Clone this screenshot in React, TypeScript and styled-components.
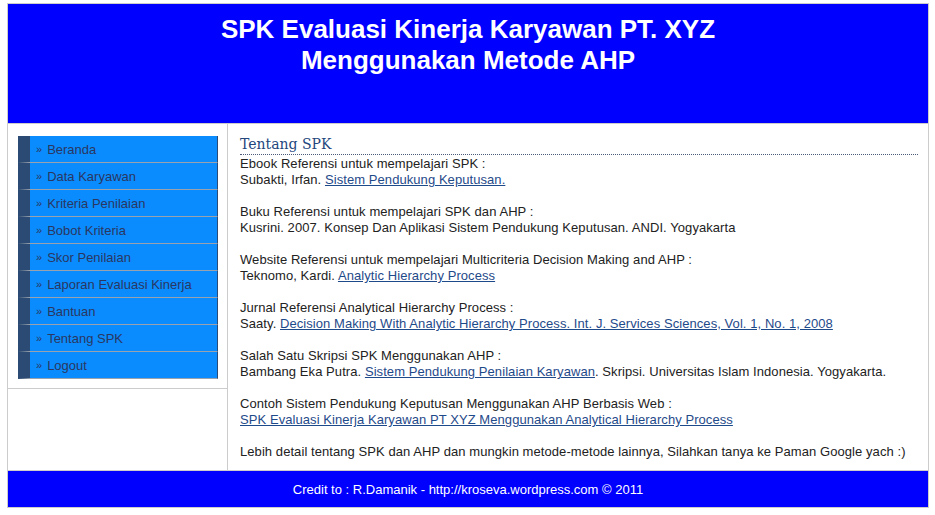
import React from 'react';
import styled, { createGlobalStyle } from 'styled-components';

const GlobalStyle = createGlobalStyle`
  html, body {
    margin: 0;
    padding: 0;
    background: #ffffff;
  }
  body {
    font-family: "Liberation Sans", Arial, sans-serif;
  }
`;

const Page = styled.div`
  margin: 3px 0 0 7px;
  width: 920px;
  border: 1px solid #cccccc;
  background: #ffffff;
`;

const Header = styled.header`
  background: #0000ff;
  height: 119px;
  padding-top: 10px;
  box-sizing: border-box;
  text-align: center;
`;

const HeaderTitle = styled.h1`
  margin: 0;
  color: #ffffff;
  font-family: "Liberation Sans", Arial, sans-serif;
  font-weight: bold;
  font-size: 26px;
  line-height: 31px;
`;

const Body = styled.div`
  display: flex;
  align-items: stretch;
  border-top: 1px solid #cccccc;
`;

const Sidebar = styled.aside`
  width: 220px;
  flex-shrink: 0;
  align-self: flex-start;
  padding: 12px 10px 9px 10px;
  box-sizing: border-box;
  border-right: 1px solid #cccccc;
  border-bottom: 1px solid #cccccc;
`;

const Menu = styled.ul`
  list-style: none;
  margin: 0;
  padding: 0;
  width: 200px;
`;

const MenuItem = styled.li`
  height: 26px;
  display: flex;
  align-items: center;
  background: #0a8cff;
  border-left: 12px solid #2c4b74;
  border-right: 1px solid #2c4b74;
  border-bottom: 1px solid #9aa3ad;
  padding-left: 6px;
  font-size: 13px;
  color: #2a3760;
  cursor: pointer;
`;

const Raquo = styled.span`
  font-size: 11px;
  margin-right: 5px;
  color: #2a3760;
`;

const Content = styled.main`
  flex: 1;
  margin-left: -1px;
  border-left: 1px solid #cccccc;
  padding: 10px 10px 10px 12px;
  box-sizing: border-box;
`;

const ContentTitle = styled.h2`
  margin: 0;
  font-family: "DejaVu Serif", "Liberation Serif", serif;
  font-weight: normal;
  font-size: 14px;
  line-height: 20px;
  color: #23467d;
  border-bottom: 1px dotted #4a5a78;
`;

const Text = styled.div`
  margin-top: 1px;
  font-size: 13px;
  line-height: 16px;
  color: #222222;
  letter-spacing: 0.07px;
`;

const Paragraph = styled.p`
  margin: 0 0 16px 0;

  &:last-child {
    margin-bottom: 0;
  }
`;

const Link = styled.a`
  color: #1f4a8a;
  text-decoration: underline;
`;

const Footer = styled.footer`
  border-top: 1px solid #cccccc;
  background: #0000ff;
  height: 36px;
  display: flex;
  align-items: center;
  justify-content: center;
  color: #ffffff;
  font-size: 13px;
`;

const menu = [
  'Beranda',
  'Data Karyawan',
  'Kriteria Penilaian',
  'Bobot Kriteria',
  'Skor Penilaian',
  'Laporan Evaluasi Kinerja',
  'Bantuan',
  'Tentang SPK',
  'Logout',
];

export default function App() {
  return (
    <>
      <GlobalStyle />
      <Page>
        <Header>
          <HeaderTitle>
            SPK Evaluasi Kinerja Karyawan PT. XYZ
            <br />
            Menggunakan Metode AHP
          </HeaderTitle>
        </Header>
        <Body>
          <Sidebar>
            <Menu>
              {menu.map(item => (
                <MenuItem key={item}>
                  <Raquo>»</Raquo>
                  {item}
                </MenuItem>
              ))}
            </Menu>
          </Sidebar>
          <Content>
            <ContentTitle>Tentang SPK</ContentTitle>
            <Text>
              <Paragraph>
                Ebook Referensi untuk mempelajari SPK :<br />
                Subakti, Irfan. <Link href="#">Sistem Pendukung Keputusan.</Link>
              </Paragraph>
              <Paragraph>
                Buku Referensi untuk mempelajari SPK dan AHP :<br />
                Kusrini. 2007. Konsep Dan Aplikasi Sistem Pendukung Keputusan. ANDI. Yogyakarta
              </Paragraph>
              <Paragraph>
                Website Referensi untuk mempelajari Multicriteria Decision Making and AHP :<br />
                Teknomo, Kardi. <Link href="#">Analytic Hierarchy Process</Link>
              </Paragraph>
              <Paragraph>
                Jurnal Referensi Analytical Hierarchy Process :<br />
                Saaty. <Link href="#">Decision Making With Analytic Hierarchy Process. Int. J. Services Sciences, Vol. 1, No. 1, 2008</Link>
              </Paragraph>
              <Paragraph>
                Salah Satu Skripsi SPK Menggunakan AHP :<br />
                Bambang Eka Putra. <Link href="#">Sistem Pendukung Penilaian Karyawan</Link>. Skripsi. Universitas Islam Indonesia. Yogyakarta.
              </Paragraph>
              <Paragraph>
                Contoh Sistem Pendukung Keputusan Menggunakan AHP Berbasis Web :<br />
                <Link href="#">SPK Evaluasi Kinerja Karyawan PT XYZ Menggunakan Analytical Hierarchy Process</Link>
              </Paragraph>
              <Paragraph>
                Lebih detail tentang SPK dan AHP dan mungkin metode-metode lainnya, Silahkan tanya ke Paman Google yach :)
              </Paragraph>
            </Text>
          </Content>
        </Body>
        <Footer>Credit to : R.Damanik - http://kroseva.wordpress.com © 2011</Footer>
      </Page>
    </>
  );
}
